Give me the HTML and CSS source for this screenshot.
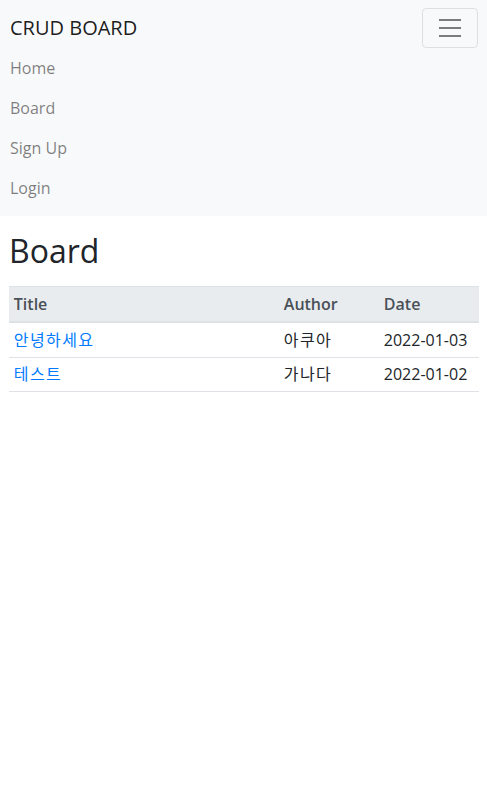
FILE: index.html
```html
<!DOCTYPE html>
<html lang="ko">
<head>
<meta charset="utf-8">
<title>CRUD BOARD</title>
<link rel="stylesheet" href="styles.css">
</head>
<body>
<nav class="navbar">
  <a class="brand" href="#">CRUD BOARD</a>
  <button class="toggler" type="button" aria-label="Toggle navigation">
    <svg class="toggler-icon" viewBox="0 0 30 30" width="30" height="30">
      <path stroke="rgba(0,0,0,0.5)" stroke-linecap="butt" stroke-miterlimit="10" stroke-width="2" d="M4 7h22M4 15h22M4 23h22"/>
    </svg>
  </button>
  <ul class="nav-list">
    <li><a class="nav-link" href="#">Home</a></li>
    <li><a class="nav-link" href="#">Board</a></li>
    <li><a class="nav-link" href="#">Sign Up</a></li>
    <li><a class="nav-link" href="#">Login</a></li>
  </ul>
</nav>
<main class="content">
  <h1 class="title">Board</h1>
  <table class="board-table">
    <thead>
      <tr>
        <th class="col-title">Title</th>
        <th class="col-author">Author</th>
        <th class="col-date">Date</th>
      </tr>
    </thead>
    <tbody>
      <tr>
        <td><a class="ko" href="#">안녕하세요</a></td>
        <td><span class="ko">아쿠아</span></td>
        <td>2022-01-03</td>
      </tr>
      <tr>
        <td><a class="ko" href="#">테스트</a></td>
        <td><span class="ko">가나다</span></td>
        <td>2022-01-02</td>
      </tr>
    </tbody>
  </table>
</main>
</body>
</html>
```

FILE: styles.css
```css
* { box-sizing: border-box; }
html, body { margin: 0; padding: 0; }
body {
  font-family: "Open Sans", "Noto Sans CJK KR", sans-serif;
  font-size: 16px;
  line-height: 1.5;
  color: #212529;
  background: #fff;
}
a { text-decoration: none; }

.navbar {
  background: #f8f9fa;
  display: flex;
  flex-wrap: wrap;
  align-items: center;
  justify-content: space-between;
  padding: 8px 9px 8px 10px;
}
.brand {
  display: inline-block;
  padding: 5px 0;
  font-size: 20px;
  line-height: 30px;
  color: rgba(0,0,0,0.9);
  white-space: nowrap;
}
.toggler {
  display: flex;
  align-items: center;
  justify-content: center;
  width: 56px;
  height: 40px;
  padding: 4px 12px;
  background: transparent;
  border: 1px solid rgba(0,0,0,0.1);
  border-radius: 4px;
}
.toggler-icon { display: block; }
.nav-list {
  flex-basis: 100%;
  list-style: none;
  margin: 0;
  padding: 0;
  display: flex;
  flex-direction: column;
}
.nav-link {
  display: block;
  padding: 8px 0;
  color: rgba(0,0,0,0.5);
}

.content {
  padding: 0 8px 0 9px;
}
.title {
  font-size: 32px;
  font-weight: 400;
  line-height: 1.2;
  margin: 16px 0 16px 0;
}
.board-table {
  width: 100%;
  border-collapse: collapse;
  color: #212529;
}
.board-table th,
.board-table td {
  padding: 4.8px;
  text-align: left;
  vertical-align: top;
  border-top: 1px solid #dee2e6;
}
.board-table thead th {
  background: #e9ecef;
  color: #495057;
  font-weight: 600;
  border-bottom: 2px solid #dee2e6;
  vertical-align: bottom;
}
.board-table tbody tr:last-child td { border-bottom: 1px solid #dee2e6; }
.board-table td a { color: #007bff; }
.ko { letter-spacing: 1.4px; }
.col-author { width: 100px; }
.col-date { width: 100px; }
```
